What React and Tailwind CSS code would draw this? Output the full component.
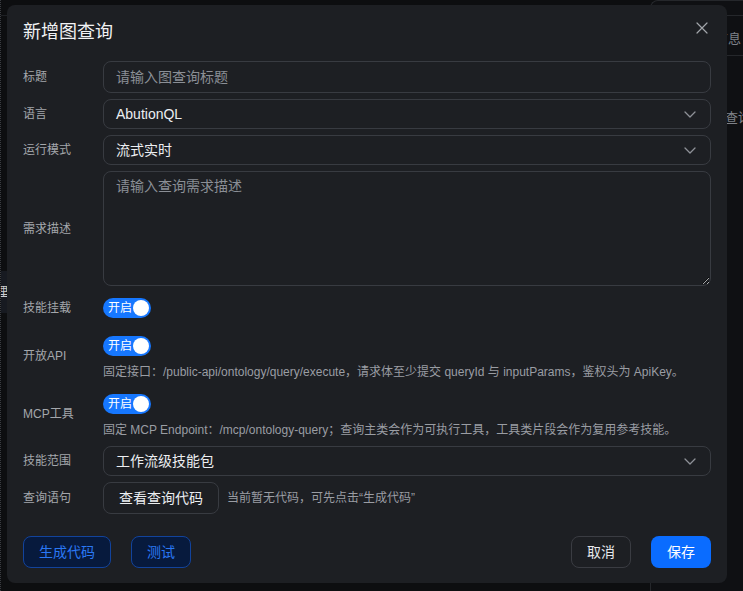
import { useState } from 'react'

function Chevron() {
  return (
    <svg width="12" height="7" viewBox="0 0 12 7" fill="none" className="shrink-0">
      <path d="M1 1l5 5 5-5" stroke="#8e9197" strokeWidth="1.3" strokeLinecap="round" strokeLinejoin="round" />
    </svg>
  )
}

function Select({ value }) {
  return (
    <div className="h-[30px] w-full flex items-center justify-between rounded-[8px] border border-[#383b41] pl-3 pr-[14px] text-[14px] text-[#eceef1]">
      <span>{value}</span>
      <Chevron />
    </div>
  )
}

function Switch({ onClick }) {
  return (
    <button
      onClick={onClick}
      className="h-[20px] w-[48px] rounded-full bg-[#1677ff] flex items-center justify-between pl-[5px] pr-[2px] text-[12px] text-white leading-none"
    >
      <span>开启</span>
      <span className="w-[16px] h-[16px] rounded-full bg-white" />
    </button>
  )
}

function Row({ label, children }) {
  return (
    <div className="flex items-center">
      <div className="w-[80px] shrink-0 text-[12px] text-[#a4a7ac]">{label}</div>
      <div className="flex-1 min-w-0">{children}</div>
    </div>
  )
}

export default function App() {
  const [title, setTitle] = useState('')
  const [desc, setDesc] = useState('')

  return (
    <div className="relative w-[743px] h-[591px] overflow-hidden bg-[#0d0e10] font-['Liberation_Sans','Noto_Sans_CJK_SC',sans-serif]">
      {/* page behind the dialog */}
      <div className="flex h-full">
        <div className="w-[8px] shrink-0 border-l border-dotted border-[#3a3c41] flex flex-col">
          <div className="h-[16px] border-b border-[#1e2024]" />
          <div className="h-[255px]" />
          <div className="h-[42px] bg-[#171a21] flex items-center overflow-hidden">
            <span className="text-[13px] text-[#c9ccd1] -ml-[6px]">理</span>
          </div>
        </div>
        <div className="flex-1 flex">
          <div className="flex-1 border-b border-[#1e2024] h-[16px]" />
          <div className="w-[93px] shrink-0 flex flex-col border-l border-t border-[#25272b] rounded-tl-[8px] bg-[#0f1013]">
            <div className="h-[15px] border-b border-[#25272b]" />
            <div className="h-[40px] flex items-center justify-end pt-[6px] pr-[2px] border-b border-[#25272b] text-[13px] text-[#7e8188]">
              基本信息
            </div>
            <div className="h-[120px] pl-[61px] pt-[52px] text-[13px] text-[#7e8188] whitespace-nowrap">图查询</div>
          </div>
        </div>
      </div>

      {/* dialog */}
      <div className="absolute left-[7px] top-[5px] w-[720px] h-[578px] rounded-[8px] bg-[#1d1f23] flex flex-col px-4 pb-[15px]">
        <div className="h-[56px] flex items-center justify-between pb-[2px]">
          <h2 className="text-[18px] text-[#f1f2f4]">新增图查询</h2>
          <button className="w-[16px] h-[16px] flex items-center justify-center mr-[1px] -mt-[8px]">
            <svg width="12" height="12" viewBox="0 0 12 12" fill="none">
              <path d="M1 1l10 10M11 1L1 11" stroke="#a3a6ab" strokeWidth="1.2" strokeLinecap="round" />
            </svg>
          </button>
        </div>

        <div className="flex flex-col gap-[6px]">
          <Row label="标题">
            <input
              value={title}
              onChange={(e) => setTitle(e.target.value)}
              placeholder="请输入图查询标题"
              className="h-[32px] w-full rounded-[8px] border border-[#383b41] bg-transparent px-3 text-[14px] text-[#eceef1] placeholder:text-[#8b8f96] outline-none"
            />
          </Row>
          <Row label="语言">
            <Select value="AbutionQL" />
          </Row>
          <Row label="运行模式">
            <Select value="流式实时" />
          </Row>
          <Row label="需求描述">
            <textarea
              value={desc}
              onChange={(e) => setDesc(e.target.value)}
              placeholder="请输入查询需求描述"
              className="block h-[115px] w-full rounded-[8px] border border-[#383b41] bg-transparent px-3 py-[3px] text-[14px] leading-[22px] text-[#eceef1] placeholder:text-[#8b8f96] outline-none"
            />
          </Row>
          <Row label="技能挂载">
            <div className="h-[32px] flex items-center">
              <Switch />
            </div>
          </Row>
          <Row label="开放API">
            <div className="h-[32px] flex items-center">
              <Switch />
            </div>
            <p className="h-[20px] leading-[20px] text-[12px] text-[#9a9da3] whitespace-nowrap">
              固定接口：/public-api/ontology/query/execute，请求体至少提交 queryId 与 inputParams，鉴权头为 ApiKey。
            </p>
          </Row>
          <Row label="MCP工具">
            <div className="h-[32px] flex items-center">
              <Switch />
            </div>
            <p className="h-[20px] leading-[20px] text-[12px] text-[#9a9da3] whitespace-nowrap">
              固定 MCP Endpoint：/mcp/ontology-query；查询主类会作为可执行工具，工具类片段会作为复用参考技能。
            </p>
          </Row>
          <Row label="技能范围">
            <Select value="工作流级技能包" />
          </Row>
          <Row label="查询语句">
            <div className="flex items-center gap-2">
              <button className="h-[32px] px-[15px] rounded-[8px] border border-[#383b41] text-[14px] text-[#eceef1]">
                查看查询代码
              </button>
              <span className="text-[12px] text-[#9a9da3]">当前暂无代码，可先点击“生成代码”</span>
            </div>
          </Row>
        </div>

        <div className="mt-auto flex items-center justify-between">
          <div className="flex items-center gap-[20px]">
            <button className="h-[32px] px-[15px] rounded-[8px] border border-[#12439c] bg-[#071a3d] text-[14px] text-[#2a78f4]">
              生成代码
            </button>
            <button className="h-[32px] px-[15px] rounded-[8px] border border-[#12439c] bg-[#071a3d] text-[14px] text-[#2a78f4]">
              测试
            </button>
          </div>
          <div className="flex items-center gap-5">
            <button className="h-[32px] px-[15px] rounded-[8px] border border-[#3a3c42] text-[14px] text-[#e6e8eb]">
              取消
            </button>
            <button className="h-[32px] px-4 rounded-[8px] bg-[#0a6cff] text-[14px] text-white">保存</button>
          </div>
        </div>
      </div>
    </div>
  )
}
